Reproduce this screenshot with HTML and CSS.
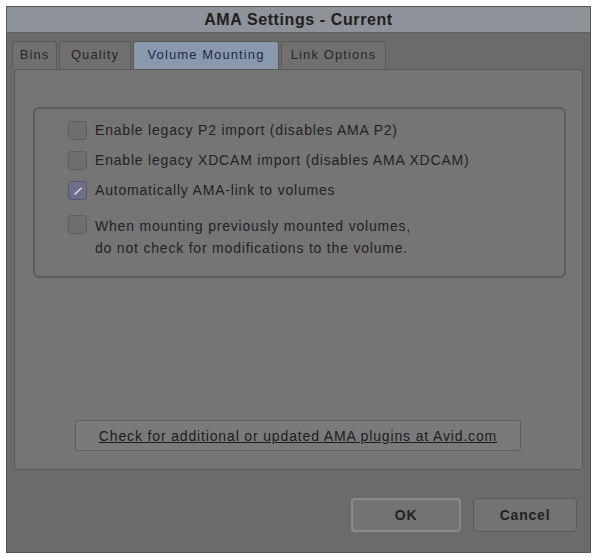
FILE: index.html
```html
<!DOCTYPE html>
<html lang="en">
<head>
    <meta charset="UTF-8">
    <title>AMA Settings - Current</title>
    <link rel="stylesheet" href="styles.css">
</head>
<body>
    <div class="dialog">
        <div class="titlebar">AMA Settings - Current</div>

        <!-- Tabs -->
        <div class="tabs">
            <div class="tab">Bins</div>
            <div class="tab">Quality</div>
            <div class="tab active">Volume Mounting</div>
            <div class="tab">Link Options</div>
        </div>

        <div class="panel">
            <div class="group">
                <label class="option"><span class="box"></span>Enable legacy P2 import (disables AMA P2)</label>
                <label class="option"><span class="box"></span>Enable legacy XDCAM import (disables AMA XDCAM)</label>
                <label class="option"><span class="box checked">
                    <svg width="12" height="12" viewBox="0 0 12 12"><path d="M2.5 9.5 L9.5 3" stroke="#dcdce8" stroke-width="1.6" fill="none"/></svg>
                </span>Automatically AMA-link to volumes</label>
                <label class="option multi"><span class="box"></span>When mounting previously mounted volumes,<br>do not check for modifications to the volume.</label>
            </div>

            <div class="link-row">
                <button class="link-btn">Check for additional or updated AMA plugins at Avid.com</button>
            </div>
        </div>

        <div class="footer">
            <button class="btn ok">OK</button>
            <button class="btn">Cancel</button>
        </div>
    </div>
</body>
</html>
```

FILE: styles.css
```css
/* Basic Reset */
* {
    margin: 0;
    padding: 0;
    box-sizing: border-box;
}

body {
    font-family: 'Liberation Sans', Arial, sans-serif;
    background-color: #fff;
    color: #1e1e1e;
    padding: 6px 7px 4px 6px;
}

.dialog {
    width: 585px;
    height: 547px;
    background-color: #6b6b6b;
    border: 1px solid #565656;
    display: flex;
    flex-direction: column;
}

.titlebar {
    height: 26px;
    line-height: 25px;
    background-color: #8e9399;
    border-bottom: 1px solid #5e6166;
    text-align: center;
    font-weight: bold;
    font-size: 16px;
    letter-spacing: 0.6px;
    color: #202020;
}

/* Tabs */
.tabs {
    display: flex;
    gap: 2px;
    padding: 8px 0 0 5px;
}

.tab {
    height: 28px;
    line-height: 26px;
    font-size: 13px;
    letter-spacing: 1.1px;
    text-align: center;
    background-color: #707070;
    border: 1px solid #5a5a5a;
    border-bottom: none;
    border-radius: 3px 3px 0 0;
    color: #262626;
}

.tab:nth-child(1) { width: 45px; }
.tab:nth-child(2) { width: 72px; }
.tab:nth-child(3) { width: 146px; }
.tab:nth-child(4) { width: 105px; }

.tab.active {
    background-color: #8a98ad;
    color: #1f2b4a;
}

/* Panel */
.panel {
    margin: 0 7px 0 7px;
    height: 401px;
    background-color: #757575;
    border: 1px solid #595959;
    border-radius: 3px;
    display: flex;
    flex-direction: column;
}

.group {
    margin: 37px 16px 0 18px;
    height: 171px;
    border: 2px solid #5d5d5d;
    border-radius: 6px;
    padding: 12px 0 0 33px;
    display: flex;
    flex-direction: column;
    gap: 11px;
}

.option {
    display: flex;
    align-items: flex-start;
    font-size: 14px;
    letter-spacing: 0.8px;
    line-height: 19px;
    color: #222;
}

.option.multi {
    line-height: 22px;
    margin-top: 4px;
}

.box {
    width: 19px;
    height: 19px;
    margin-right: 8px;
    flex-shrink: 0;
    border: 1px solid #5e5e5e;
    border-radius: 3px;
    background-color: #6e6e6e;
    display: flex;
    align-items: center;
    justify-content: center;
}

.box.checked {
    background-color: #6e7089;
    border-color: #555770;
}

.link-row {
    margin-top: auto;
    padding: 0 0 18px 60px;
}

.link-btn {
    width: 446px;
    height: 31px;
    font-family: inherit;
    font-size: 14px;
    letter-spacing: 0.85px;
    text-decoration: underline;
    color: #1c1c1c;
    background-color: #7a7a7a;
    border: 1px solid #5e5e5e;
    border-radius: 3px;
}

/* Footer buttons */
.footer {
    display: flex;
    justify-content: flex-end;
    gap: 12px;
    padding: 28px 13px 0 0;
}

.btn {
    height: 34px;
    font-family: inherit;
    font-size: 14px;
    font-weight: bold;
    letter-spacing: 0.8px;
    color: #222;
    background-color: #737373;
    border: 1px solid #5a5a5a;
    border-radius: 4px;
}

.btn.ok {
    width: 110px;
    border: 2px solid #8a8a8a;
}

.btn:not(.ok) {
    width: 104px;
}
```
